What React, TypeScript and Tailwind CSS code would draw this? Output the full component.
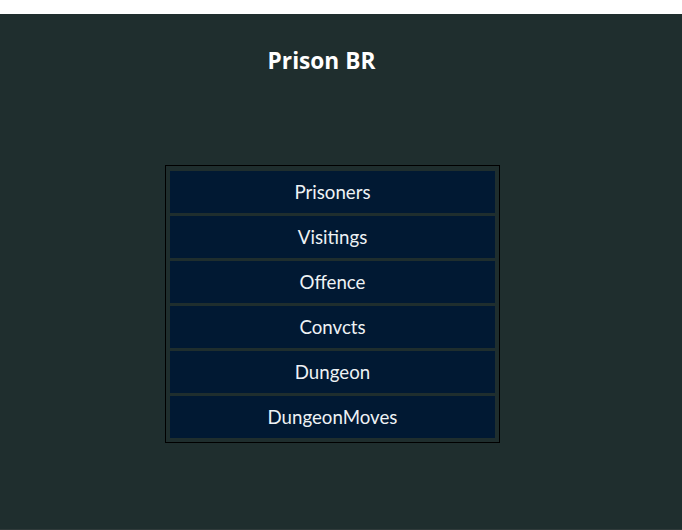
const items = ["Prisoners", "Visitings", "Offence", "Convcts", "Dungeon", "DungeonMoves"];

export default function App() {
  return (
    <div className="h-[530px] w-full overflow-hidden bg-white font-['Lato','Open_Sans',sans-serif]">
      <div className="mt-[14px] flex h-[516px] flex-col bg-[#1f2e2e]">
        <h1 className="mt-[33px] pr-[39px] text-center font-['Open_Sans',sans-serif] text-[22.7px] font-bold leading-[28px] text-white">
          Prison BR
        </h1>
        <div className="mt-[90px] flex justify-center pr-[17px]">
          <div className="flex w-[335px] flex-col gap-[3px] border border-black px-[4px] pt-[5px] pb-[4px]">
            {items.map((item) => (
              <div
                key={item}
                className="flex h-[42px] items-center justify-center bg-[#011933] text-[18.7px] text-[#eef2f5]"
              >
                {item}
              </div>
            ))}
          </div>
        </div>
        <div className="mt-auto h-px bg-[#2f3a3a]" />
      </div>
    </div>
  );
}
